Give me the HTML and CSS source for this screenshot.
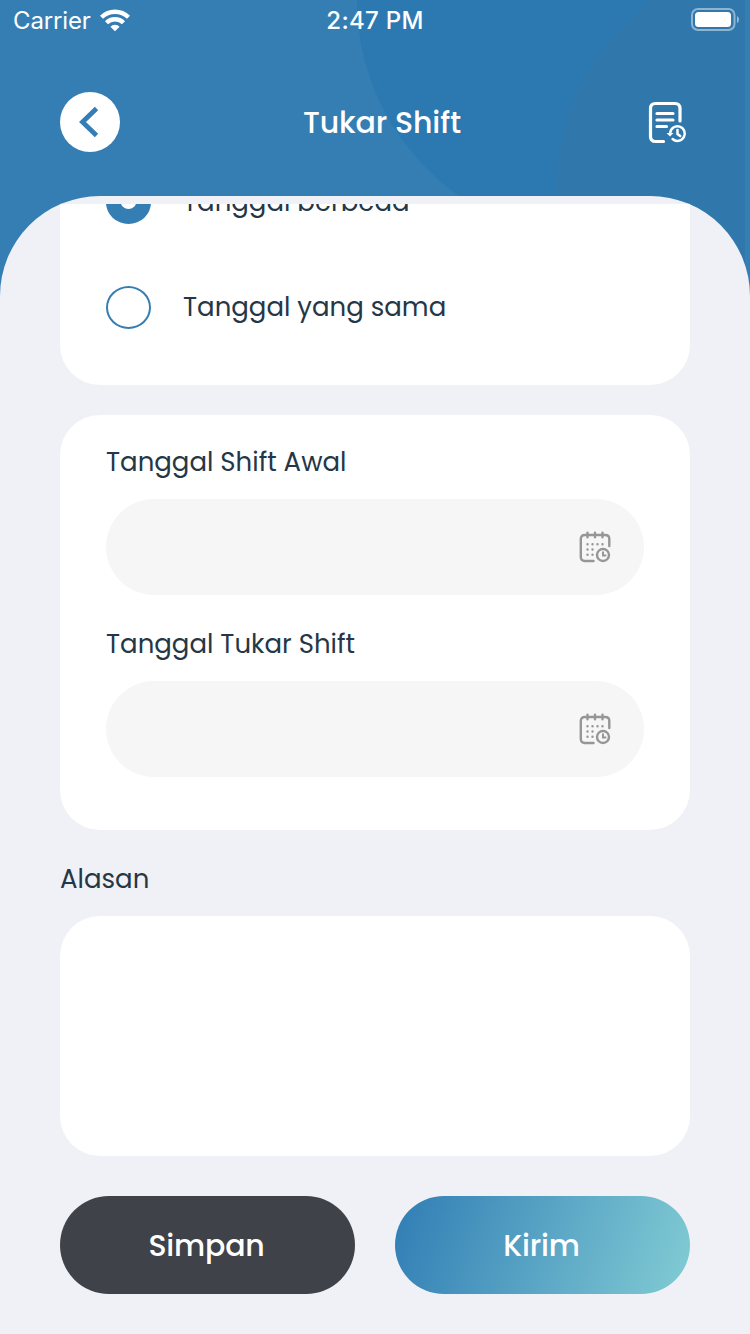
FILE: index.html
```html
<!DOCTYPE html>
<html lang="id">
<head>
<meta charset="utf-8">
<title>Tukar Shift</title>
<link rel="stylesheet" href="styles.css">
</head>
<body>
<div class="screen">
  <svg class="backdrop" width="750" height="320" viewBox="0 0 750 320">
    <defs><clipPath id="edge"><rect width="745" height="320"/></clipPath></defs>
    <g clip-path="url(#edge)">
      <circle cx="596" cy="0" r="239" fill="#2c79b2"/>
      <circle cx="783" cy="185" r="226" fill="#3078ab"/>
    </g>
  </svg>
  <div class="status">
    <div class="carrier"><span class="carrier-name">Carrier</span>
      <svg width="30" height="23" viewBox="0 0 30 23" fill="none" stroke="#fff" stroke-width="4.3">
        <path d="M1.500 8.300a19.200 19.200 0 0 1 27 0"/>
        <path d="M6.500 13.800a12 12 0 0 1 17 0"/>
        <path d="M10.400 17.700a6.500 6.500 0 0 1 9.200 0L15 22.300z" fill="#fff" stroke="none"/>
      </svg>
    </div>
    <span class="time">2:47 PM</span>
    <svg class="battery" width="49" height="24" viewBox="0 0 49 24">
      <rect x="1" y="1" width="42.500" height="21" rx="6" fill="none" stroke="#fff" stroke-opacity=".45" stroke-width="2"/>
      <rect x="4" y="4" width="36" height="15" rx="3.500" fill="#fff"/>
      <path d="M46 8q2 1 2 3.500t-2 3.500z" fill="#fff" fill-opacity=".5"/>
    </svg>
  </div>
  <header class="header">
    <button class="back" aria-label="Kembali">
      <svg width="60" height="60" viewBox="0 0 60 60"><path d="M36.500 16.500 22.500 30l14 13.500" fill="none" stroke="#347eb3" stroke-width="4.800"/></svg>
    </button>
    <h1 class="title">Tukar Shift</h1>
    <svg class="history" width="40" height="44" viewBox="0 0 40 44" fill="none" stroke="#fff" stroke-width="3.200" stroke-linecap="round">
      <path d="M15.500 40.500H7.500q-5 0-5-5V7.500q0-5 5-5H27q5 0 5 5V20"/>
      <path d="M9 12.500H25M9 19H25M9 25.500H18.500"/>
      <g stroke-width="2.500"><path d="M22.200 32A7.300 7.300 0 1 1 24.600 38"/><path d="M29.500 29v4l2.700 2"/></g>
      <path d="M18.500 32h7l-3.500 3.500z" fill="#fff" stroke="none"/>
    </svg>
  </header>
  <main class="panel">
    <div class="scroll">
      <section class="card choices">
        <label class="choice"><span class="radio on"></span><span>Tanggal berbeda</span></label>
        <label class="choice"><span class="radio"></span><span>Tanggal yang sama</span></label>
      </section>
      <section class="card dates">
        <label class="label">Tanggal Shift Awal</label>
        <div class="field"><svg width="32" height="32"><use href="#calendar"/></svg></div>
        <label class="label second">Tanggal Tukar Shift</label>
        <div class="field"><svg width="32" height="32"><use href="#calendar"/></svg></div>
      </section>
      <label class="label reason">Alasan</label>
      <div class="card note"></div>
      <div class="actions">
        <button class="btn save">Simpan</button>
        <button class="btn send">Kirim</button>
      </div>
    </div>
  </main>
</div>
<svg width="0" height="0" class="sprite">
  <symbol id="calendar" viewBox="0 0 32 32">
    <g fill="none" stroke="#969696" stroke-width="2.400" stroke-linecap="round">
      <path d="M14.500 30H5.800q-4 0-4-4V8q0-4 4-4h20.500q4 0 4 4v7M8.500 1.700v4.500M16 1.700v4.500M23.500 1.700v4.500"/>
      <circle cx="24" cy="24" r="6"/>
      <path d="M24 21.200v3.300h2.500" stroke-width="2"/>
      <path d="M8.500 13.300h.01M13.500 13.300h.01M18.500 13.300h.01M23.500 13.300h.01M8.500 18.500h.01M13.500 18.500h.01M8.500 23.700h.01M13.500 23.700h.01"/>
    </g>
  </symbol>
</svg>
</body>
</html>
```

FILE: styles.css
```css
* { box-sizing: border-box; }
body { margin: 0; font-family: Poppins, Inter, "Open Sans", sans-serif; }
button { border: 0; padding: 0; font: inherit; cursor: pointer; }
.screen { position: relative; width: 750px; height: 1334px; overflow: hidden; background: #357eb3; }
.backdrop { position: absolute; top: 0; left: 0; }
.sprite { position: absolute; }
.status { position: relative; height: 40px; display: grid; grid-template-columns: 1fr auto 1fr; align-items: center; padding: 0 10px 0 13px; color: #fff; font-family: Inter, sans-serif; font-size: 24px; line-height: 38px; }
.carrier { display: flex; align-items: center; gap: 9px; }
.carrier-name { padding-top: 2px; letter-spacing: -0.15px; }
.time { font-weight: 500; letter-spacing: 0.3px; padding: 2px 3px 0 0; }
.battery { justify-self: end; }
.header { position: relative; height: 156px; display: flex; align-items: center; justify-content: space-between; padding: 8px 62px 0 60px; }
.back { width: 60px; height: 60px; border-radius: 50%; background: #fff; }
.back svg { display: block; }
.title { margin: 0; padding: 2px 4px 0 0; color: #fff; font-size: 30px; font-weight: 500; line-height: 44px; letter-spacing: -0.1px; }
.history { margin-top: 1px; }
.panel { position: relative; height: 1138px; padding-top: 8px; background: #f0f1f6; border-radius: 100px 100px 0 0; overflow: hidden; }
.scroll { height: 1130px; padding: 0 60px; overflow: hidden; color: #253746; font-size: 26px; font-weight: 400; }
.card { background: #fff; border-radius: 40px; }
.choices { height: 221px; margin-top: -40px; padding: 17px 46px 0; display: flex; flex-direction: column; gap: 62px; }
.choice { display: flex; align-items: flex-start; gap: 32px; height: 43px; line-height: 43px; }
.radio { width: 45px; height: 43px; border: 2px solid #347eb3; border-radius: 50%; }
.radio.on { border-width: 15px; }
.dates { height: 415px; margin-top: 30px; padding: 27px 46px 0; }
.label { display: block; height: 40px; line-height: 40px; }
.field { height: 96px; margin-top: 17px; border-radius: 48px; background: #f6f6f6; display: flex; align-items: center; justify-content: flex-end; padding-right: 33px; }
.second { margin-top: 29px; }
.reason { margin-top: 29px; }
.note { height: 240px; margin-top: 17px; }
.actions { display: flex; gap: 40px; margin-top: 40px; }
.btn { flex: 1; height: 98px; padding: 1px 2px 0 0; border-radius: 49px; color: #fff; font-size: 30px; font-weight: 500; letter-spacing: -0.2px; }
.save { background: #3f4249; }
.send { background: linear-gradient(108deg, #307db5 0%, #82ccd4 100%); }
```
